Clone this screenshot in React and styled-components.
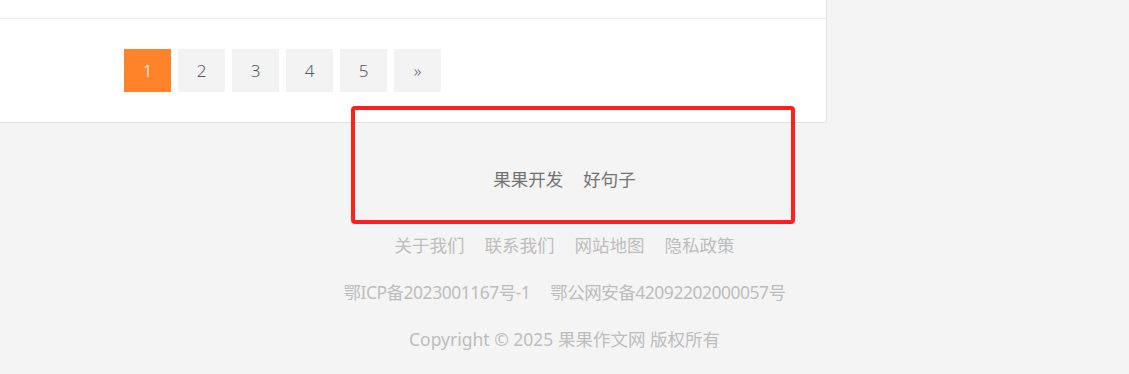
import React from 'react'
import styled, { createGlobalStyle } from 'styled-components'

const GlobalStyle = createGlobalStyle`
  html, body {
    margin: 0;
    padding: 0;
    background: #f4f4f4;
    font-family: "Noto Sans", "Noto Sans CJK SC", sans-serif;
  }
`

const Page = styled.div`
  position: relative;
  width: 1129px;
  height: 374px;
  overflow: hidden;
`
const Panel = styled.div`
  width: 826px;
  background: #fff;
  border-right: 1px solid #e3e3e3;
  border-bottom: 1px solid #e3e3e3;
`
const ListTail = styled.div`
  height: 18px;
  border-bottom: 1px solid #efefef;
`
const Pager = styled.div`
  display: flex;
  gap: 7px;
  padding: 30px 0 30px 124px;
`
const PageBtn = styled.a`
  display: flex;
  align-items: center;
  justify-content: center;
  width: 47px;
  height: 43px;
  font-size: 17px;
  font-weight: 300;
  color: ${props => props.active ? '#fff' : '#545a63'};
  background: ${props => props.active ? '#ff832a' : '#f3f3f3'};
  text-decoration: none;
  cursor: pointer;
`
const Footer = styled.footer`
  display: flex;
  flex-direction: column;
  align-items: center;
  padding-top: 33px;
  font-size: 17.5px;
`
const Line = styled.div`
  display: flex;
  gap: 20px;
  height: 47px;
  line-height: 47px;
  color: ${props => props.dark ? '#737373' : '#bdbdbd'};
  letter-spacing: ${props => props.tight ? '-0.5px' : '0'};
  margin-bottom: ${props => props.spaced ? '19px' : '0'};
`
const Highlight = styled.div`
  position: absolute;
  left: 351px;
  top: 106px;
  width: 444px;
  height: 118px;
  box-sizing: border-box;
  border: 4px solid #ff1f1f;
  border-radius: 4px;
  pointer-events: none;
`

export default function App() {
  const pages = ['1', '2', '3', '4', '5', '»']
  return (
    <Page>
      <GlobalStyle />
      <Panel>
        <ListTail />
        <Pager>
          {pages.map((p, i) => (
            <PageBtn key={p} active={i === 0}>{p}</PageBtn>
          ))}
        </Pager>
      </Panel>
      <Footer>
        <Line dark spaced>
          <span>果果开发</span>
          <span>好句子</span>
        </Line>
        <Line>
          <span>关于我们</span>
          <span>联系我们</span>
          <span>网站地图</span>
          <span>隐私政策</span>
        </Line>
        <Line tight>
          <span>鄂ICP备2023001167号-1</span>
          <span>鄂公网安备42092202000057号</span>
        </Line>
        <Line>Copyright © 2025 果果作文网 版权所有</Line>
      </Footer>
      <Highlight />
    </Page>
  )
}
